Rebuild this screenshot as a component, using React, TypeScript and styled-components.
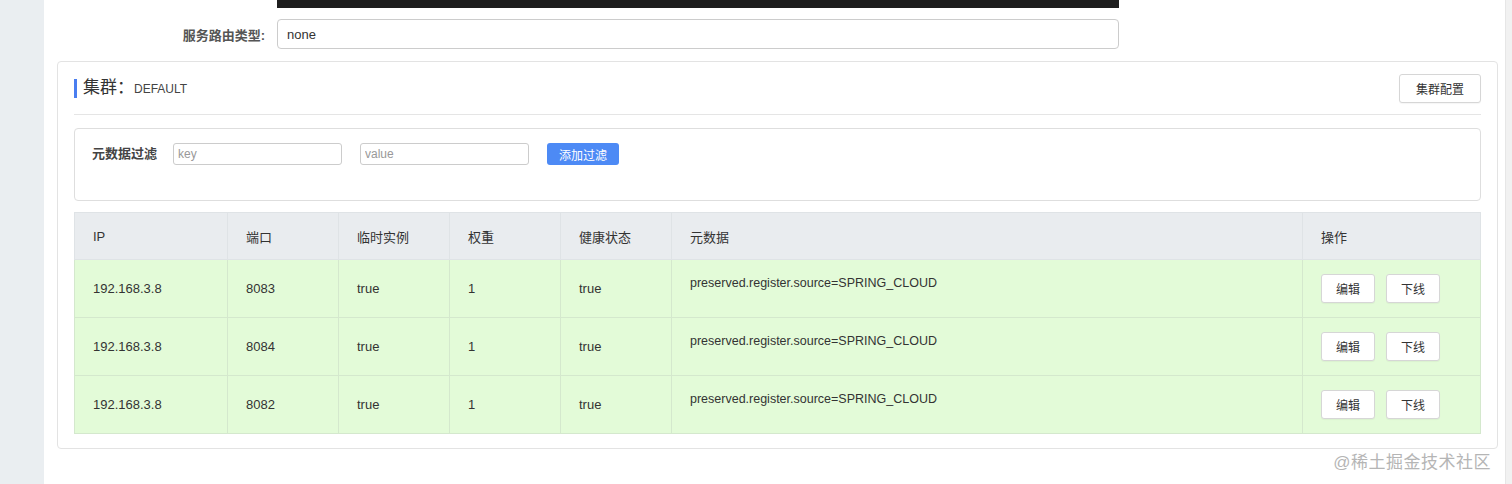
import React from "react"
import styled, { createGlobalStyle } from "styled-components"

const GlobalStyle = createGlobalStyle`
    html, body {
        margin: 0;
        padding: 0;
        background: #fff;
        font-family: "Liberation Sans", "Noto Sans CJK SC", sans-serif;
        color: #333;
    }
`

const instances = [
    { ip: "192.168.3.8", port: "8083", ephemeral: "true", weight: "1", healthy: "true" },
    { ip: "192.168.3.8", port: "8084", ephemeral: "true", weight: "1", healthy: "true" },
    { ip: "192.168.3.8", port: "8082", ephemeral: "true", weight: "1", healthy: "true" },
]

const columns = [
    { title: "IP", width: 153 },
    { title: "端口", width: 111 },
    { title: "临时实例", width: 111 },
    { title: "权重", width: 111 },
    { title: "健康状态", width: 111 },
    { title: "元数据", width: 631 },
    { title: "操作", width: 178 },
]

export default function App() {
    return (
        <Page>
            <GlobalStyle />
            <Sidebar />
            <Main>
                <FormRow $top={0}>
                    <FormLabel />
                    <EditorTail />
                </FormRow>
                <FormRow $top={11}>
                    <FormLabel>服务路由类型:</FormLabel>
                    <TextField defaultValue="none" />
                </FormRow>

                <Card>
                    <CardHeader>
                        <Title>
                            集群：<small>DEFAULT</small>
                        </Title>
                        <Button $wide>集群配置</Button>
                    </CardHeader>

                    <FilterPanel>
                        <FilterLabel>元数据过滤</FilterLabel>
                        <SmallInput placeholder="key" />
                        <SmallInput placeholder="value" />
                        <PrimaryButton>添加过滤</PrimaryButton>
                    </FilterPanel>

                    <Table>
                        <colgroup>
                            {columns.map((c) => (
                                <col key={c.title} style={{ width: c.width }} />
                            ))}
                        </colgroup>
                        <thead>
                            <tr>
                                {columns.map((c) => (
                                    <th key={c.title}>{c.title}</th>
                                ))}
                            </tr>
                        </thead>
                        <tbody>
                            {instances.map((row) => (
                                <tr key={row.port}>
                                    <td>{row.ip}</td>
                                    <td>{row.port}</td>
                                    <td>{row.ephemeral}</td>
                                    <td>{row.weight}</td>
                                    <td>{row.healthy}</td>
                                    <MetaCell>preserved.register.source=SPRING_CLOUD</MetaCell>
                                    <td>
                                        <Actions>
                                            <Button>编辑</Button>
                                            <Button>下线</Button>
                                        </Actions>
                                    </td>
                                </tr>
                            ))}
                        </tbody>
                    </Table>
                </Card>
                <Watermark>@稀土掘金技术社区</Watermark>
            </Main>
            <ScrollStrip />
        </Page>
    )
}

const Page = styled.div`
    display: flex;
    width: 1512px;
    height: 484px;
    overflow: hidden;
`

const Sidebar = styled.aside`
    width: 44px;
    flex-shrink: 0;
    background: #eaeef1;
`

const ScrollStrip = styled.div`
    width: 8px;
    flex-shrink: 0;
    background: #f1f1f1;
    border-left: 1px solid #e6e6e6;
`

const Main = styled.main`
    position: relative;
    flex: 1;
    padding: 0 7px 0 13px;
`

const FormRow = styled.div<{ $top: number }>`
    display: flex;
    align-items: center;
    gap: 12px;
    margin-top: ${(p) => p.$top}px;
`

const FormLabel = styled.label`
    width: 208px;
    text-align: right;
    font-size: 13px;
    font-weight: bold;
    color: #555;
`

const EditorTail = styled.div`
    width: 842px;
    height: 8px;
    background: #1e1e1e;
`

const TextField = styled.input`
    box-sizing: border-box;
    width: 842px;
    height: 30px;
    padding: 0 9px;
    border: 1px solid #ccc;
    border-radius: 4px;
    font-family: inherit;
    font-size: 13px;
    color: #333;
    outline: none;
`

const Card = styled.section`
    margin-top: 12px;
    border: 1px solid #e3e3e3;
    border-radius: 4px;
    padding: 0 16px 14px;
`

const CardHeader = styled.div`
    display: flex;
    align-items: center;
    justify-content: space-between;
    height: 51px;
    padding-top: 1px;
    border-bottom: 1px solid #e5e5e5;
`

const Title = styled.h3`
    margin: 0;
    padding-left: 6px;
    border-left: 3px solid #4a7ef0;
    font-size: 17px;
    font-weight: normal;
    line-height: 17px;
    color: #333;

    small {
        font-size: 12px;
        color: #444;
    }
`

const Button = styled.button<{ $wide?: boolean }>`
    height: 29px;
    padding: 0 ${(p) => (p.$wide ? 16 : 14)}px;
    background: #fff;
    border: 1px solid #d6d6d6;
    border-radius: 3px;
    font-family: inherit;
    font-size: 12px;
    color: #333;
    box-shadow: 0 1px 1px rgba(0, 0, 0, 0.04);
`

const FilterPanel = styled.div`
    display: flex;
    align-items: flex-start;
    height: 73px;
    margin-top: 13px;
    padding: 14px 17px 0;
    box-sizing: border-box;
    border: 1px solid #dedede;
    border-radius: 4px;
    gap: 18px;
`

const FilterLabel = styled.span`
    line-height: 22px;
    font-size: 13px;
    font-weight: bold;
    color: #444;
    margin-right: -2px;
`

const SmallInput = styled.input`
    box-sizing: border-box;
    width: 169px;
    height: 22px;
    padding: 0 4px;
    border: 1px solid #ccc;
    border-radius: 3px;
    font-family: inherit;
    font-size: 12px;
    outline: none;

    &::placeholder {
        color: #999;
    }
`

const PrimaryButton = styled.button`
    height: 22px;
    padding: 0 12px;
    background: #4d8af5;
    border: none;
    border-radius: 3px;
    color: #fff;
    font-family: inherit;
    font-size: 12px;
`

const Table = styled.table`
    width: 100%;
    margin-top: 11px;
    border-collapse: collapse;
    table-layout: fixed;
    font-size: 13px;
    color: #333;

    thead tr {
        height: 47px;
    }

    tbody tr {
        height: 58px;
    }

    th {
        padding: 0 18px;
        background: #e9ecef;
        border: 1px solid #dfe3e6;
        text-align: left;
        font-weight: normal;
    }

    td {
        padding: 0 18px;
        background: #e3fbd8;
        border: 1px solid #d4e8cd;
        vertical-align: middle;
    }
`

const MetaCell = styled.td`
    && {
        vertical-align: top;
        padding-top: 16px;
        font-size: 12.5px;
    }
`

const Actions = styled.div`
    display: flex;
    gap: 11px;
`

const Watermark = styled.div`
    position: absolute;
    right: 14px;
    top: 448px;
    font-size: 17px;
    color: #b5b5b5;
    letter-spacing: 0.5px;
`
